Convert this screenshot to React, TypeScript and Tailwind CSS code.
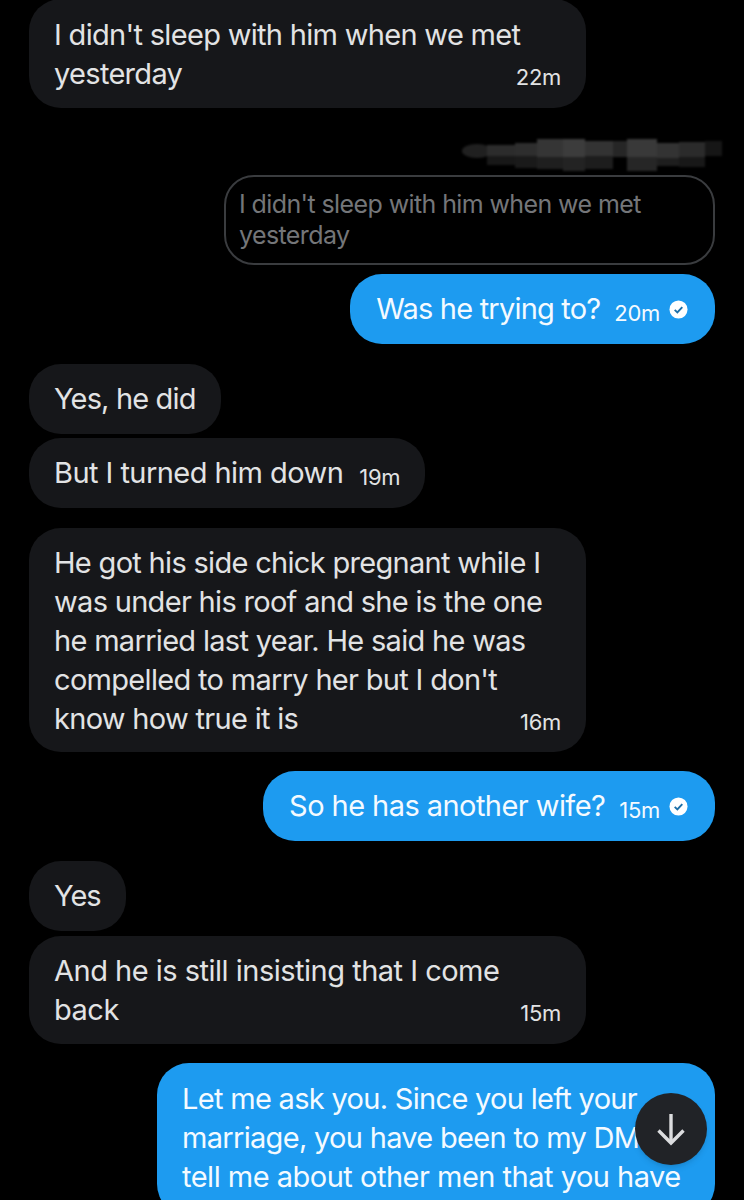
import type { ReactNode } from 'react';

function Check() {
  return (
    <svg viewBox="0 0 20 20" className="w-[19px] h-[19px] ml-[9px] shrink-0" aria-hidden>
      <circle cx="10" cy="10" r="9.5" fill="#fff" />
      <path d="M6 10.4l2.8 2.7L14 7.4" fill="none" stroke="#1d6fa8" strokeWidth="2" />
    </svg>
  );
}

function Time({ children }: { children: ReactNode }) {
  return <span className="text-[22px] leading-none tracking-[-0.3px]">{children}</span>;
}

function Incoming({ lines, time, className = '' }: { lines: string[]; time?: string; className?: string }) {
  return (
    <div className={`self-start bg-[#16171a] rounded-[32px] pl-[25px] pr-[25px] pt-[15px] pb-[14px] text-[#e2e3e4] max-w-[557px] ${className}`}>
      {lines.map((l, i) => (
        <div key={i} className="h-[39px] leading-[39px] whitespace-nowrap">{l}</div>
      ))}
      {time && <div className="-mt-[37px] h-[32px] flex items-end justify-end"><Time>{time}</Time></div>}
    </div>
  );
}

function Short({ text, time, className = '' }: { text: string; time?: string; className?: string }) {
  return (
    <div className={`self-start h-[70px] flex items-center bg-[#16171a] rounded-[32px] pl-[25px] pr-[25px] text-[#e2e3e4] whitespace-nowrap ${className}`}>
      <span>{text}</span>
      {time && <span className="ml-[16px] mt-[4px]"><Time>{time}</Time></span>}
    </div>
  );
}

function Outgoing({ text, time, className = '' }: { text: string; time: string; className?: string }) {
  return (
    <div className={`self-end h-[70px] flex items-center bg-[#1d9bf0] rounded-[32px] pl-[26px] pr-[27px] text-[#f4faff] whitespace-nowrap ${className}`}>
      <span>{text}</span>
      <span className="ml-[14px] mt-[4px]"><Time>{time}</Time></span>
      <Check />
    </div>
  );
}

// scribbled-out name above the quoted reply
function Redaction() {
  const blocks = [
    [488, 145, 28, 11, '#2c2c2c'], [488, 156, 28, 9, '#181818'], [516, 143, 22, 13, '#2e2e2e'], [516, 156, 22, 12, '#1a1a1a'],
    [538, 139, 26, 18, '#353535'], [538, 157, 26, 12, '#1f1f1f'], [564, 139, 22, 18, '#3c3c3c'], [564, 157, 22, 14, '#232323'],
    [586, 141, 28, 15, '#333333'], [586, 156, 28, 13, '#1d1d1d'], [614, 141, 14, 16, '#262626'], [628, 139, 30, 18, '#393939'],
    [628, 157, 30, 14, '#262626'], [658, 143, 22, 15, '#333333'], [658, 158, 22, 8, '#1e1e1e'], [680, 142, 26, 15, '#2b2b2b'],
    [680, 157, 26, 10, '#181818'], [706, 141, 17, 15, '#161616'],
  ] as const;
  return (
    <svg viewBox="463 138 262 34" className="self-end w-[262px] h-[34px] -mr-[9px] mb-[3px] blur-[1px]" aria-hidden>
      <ellipse cx="478" cy="151" rx="15" ry="7" fill="#202020" />
      {blocks.map(([x, y, w, h, c], i) => (
        <rect key={i} x={x} y={y} width={w} height={h} fill={c} />
      ))}
    </svg>
  );
}

export default function App() {
  return (
    <div className="relative h-[1200px] w-[744px] overflow-hidden bg-black font-['Inter',sans-serif] text-[29px] tracking-[-0.69px]">
      <div className="flex flex-col pl-[29px] pr-[29px] -mt-[1px]">
        <Incoming lines={["I didn't sleep with him when we met", 'yesterday']} time="22m" className="w-[557px] h-[109px] pt-[16px]" />

        <div className="mt-[30px] flex flex-col"><Redaction /></div>

        <div className="self-end w-[491px] h-[90px] border-2 border-[#3a3c3f] rounded-[30px] pl-[13px] pt-[12px] text-[25px] tracking-[-0.6px] leading-[31px] text-[#747679]">
          I didn't sleep with him when we met
          <br />
          yesterday
        </div>
        <Outgoing text="Was he trying to?" time="20m" className="mt-[9px] tracking-[-0.8px]" />

        <Short text="Yes, he did" className="mt-[20px] tracking-[-0.85px]" />
        <Short text="But I turned him down" time="19m" className="mt-[4px] tracking-[-0.55px]" />

        <Incoming
          lines={['He got his side chick pregnant while I', 'was under his roof and she is the one', 'he married last year. He said he was', "compelled to marry her but I don't", 'know how true it is']}
          time="16m"
          className="w-[557px] h-[224px] mt-[20px]"
        />
        <Outgoing text="So he has another wife?" time="15m" className="mt-[19px] tracking-[-0.56px]" />

        <Short text="Yes" className="mt-[20px] tracking-[-1px]" />
        <Incoming lines={['And he is still insisting that I come', 'back']} time="15m" className="w-[557px] h-[108px] mt-[5px] tracking-[-0.5px]" />

        <div className="self-end w-[558px] mt-[19px] bg-[#1d9bf0] rounded-[32px] pl-[25px] pt-[16px] pb-[20px] text-[#f4faff]">
          <div className="h-[39px] leading-[39px] whitespace-nowrap">Let me ask you. Since you left your</div>
          <div className="h-[39px] leading-[39px] whitespace-nowrap">marriage, you have been to my DM to</div>
          <div className="h-[39px] leading-[39px] whitespace-nowrap tracking-[-0.5px]">tell me about other men that you have</div>
        </div>
      </div>

      <div className="absolute left-[635px] top-[1093px] w-[72px] h-[72px] rounded-full bg-[#212327] flex items-center justify-center shadow-md">
        <svg viewBox="0 0 30 34" className="w-[30px] h-[34px]" fill="none" stroke="#dcdddf" strokeWidth="3.4" aria-hidden>
          <path d="M15 2v28" />
          <path d="M2.5 18.5L15 31l12.5-12.5" />
        </svg>
      </div>
    </div>
  );
}
